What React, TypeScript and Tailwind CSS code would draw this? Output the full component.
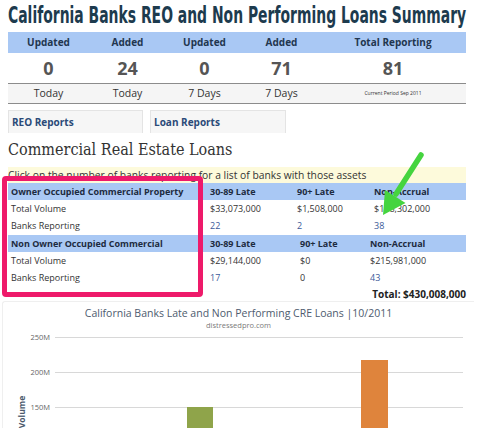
import React from "react";

const blue = "bg-[#a9c8f4]";

function SummaryCell({ children, cls }: { children: React.ReactNode; cls: string }) {
  return <div className={cls}>{children}</div>;
}

export default function App() {
  const heads = ["Updated", "Added", "Updated", "Added", "Total Reporting"];
  const nums = ["0", "24", "0", "71", "81"];
  const bottoms = ["Today", "Today", "7 Days", "7 Days"];
  return (
    <div className="relative w-[480px] h-[428px] overflow-hidden bg-white font-['Open_Sans',sans-serif] text-[#333]">
      <div className="ml-2 w-[458px]">
        <div className="h-[32px] pt-[1px] whitespace-nowrap">
          <h1 className="inline-block origin-left scale-x-[0.673] font-['DejaVu_Sans_Condensed','DejaVu_Sans',sans-serif] font-bold text-[23px] leading-[28px] text-[#1d3b4e]">
            California Banks REO and Non Performing Loans Summary
          </h1>
        </div>

        <div className="grid grid-cols-[81px_77px_77px_77px_1fr] text-center">
          {heads.map((h, i) => (
            <SummaryCell key={"h" + i} cls={`${blue} h-[21px] leading-[21px] text-[10px] font-bold text-[#22364f]`}>
              {h}
            </SummaryCell>
          ))}
          {nums.map((n, i) => (
            <SummaryCell key={"n" + i} cls="h-[31px] leading-[30px] text-[18px] font-bold text-[#555] border-b border-[#8c8c8c]">
              {n}
            </SummaryCell>
          ))}
          {bottoms.map((b, i) => (
            <SummaryCell key={"b" + i} cls="h-[20px] leading-[19px] text-[10.5px] bg-[#f5f5f5] border-b border-[#8c8c8c]">
              {b}
            </SummaryCell>
          ))}
          <SummaryCell cls="h-[20px] leading-[19px] text-[5px] bg-[#f5f5f5] border-b border-[#8c8c8c]">
            Current Period Sep 2011
          </SummaryCell>
        </div>

        <div className="mt-[6px] flex gap-[7px]">
          <div className="w-[135px] h-[23px] bg-[#f6f6f6] border border-b-0 border-[#e4e4e4] pl-[3px] text-[10px] font-bold text-[#2b4a78] leading-[22px]">
            REO Reports
          </div>
          <div className="w-[136px] h-[23px] bg-[#f6f6f6] border border-b-0 border-[#e4e4e4] pl-[3px] text-[10px] font-bold text-[#2b4a78] leading-[22px]">
            Loan Reports
          </div>
        </div>

        <div className="h-[34px] pt-[7px]">
          <h2 className="font-['DejaVu_Serif_Condensed','DejaVu_Serif',serif] text-[16px] leading-[20px] text-[#333]">
            Commercial Real Estate Loans
          </h2>
        </div>

        <div className="h-[16px] leading-[16px] bg-[#fdfadb] text-[10.3px] whitespace-nowrap">
          Click on the number of banks reporting for a list of banks with those assets
        </div>

        <div className="grid grid-cols-[199px_87px_77px_1fr] text-[9px]">
          <div className={`${blue} h-[17px] leading-[17px] pl-[3px] font-bold text-[#1d2b40]`}>Owner Occupied Commercial Property</div>
          <div className={`${blue} h-[17px] leading-[17px] pl-[3px] font-bold text-[#1d2b40]`}>30-89 Late</div>
          <div className={`${blue} h-[17px] leading-[17px] pl-[3px] font-bold text-[#1d2b40]`}>90+ Late</div>
          <div className={`${blue} h-[17px] leading-[17px] pl-[3px] font-bold text-[#1d2b40]`}>Non-Accrual</div>

          <div className="h-[17px] leading-[17px] pl-[3px]">Total Volume</div>
          <div className="h-[17px] leading-[17px] pl-[3px]">$33,073,000</div>
          <div className="h-[17px] leading-[17px] pl-[3px]">$1,508,000</div>
          <div className="h-[17px] leading-[17px] pl-[3px]">$158,302,000</div>

          <div className="h-[18px] leading-[18px] pl-[3px]">Banks Reporting</div>
          <div className="h-[18px] leading-[18px] pl-[3px] text-[#3c5a99]">22</div>
          <div className="h-[18px] leading-[18px] pl-[3px] text-[#3c5a99]">2</div>
          <div className="h-[18px] leading-[18px] pl-[3px] text-[#3c5a99]">38</div>
        </div>

        <div className="grid grid-cols-[199px_90px_70px_1fr] text-[9px]">
          <div className={`${blue} h-[17px] leading-[17px] pl-[3px] font-bold text-[#1d2b40]`}>Non Owner Occupied Commercial</div>
          <div className={`${blue} h-[17px] leading-[17px] pl-[3px] font-bold text-[#1d2b40]`}>30-89 Late</div>
          <div className={`${blue} h-[17px] leading-[17px] pl-[3px] font-bold text-[#1d2b40]`}>90+ Late</div>
          <div className={`${blue} h-[17px] leading-[17px] pl-[3px] font-bold text-[#1d2b40]`}>Non-Accrual</div>

          <div className="h-[17px] leading-[17px] pl-[3px]">Total Volume</div>
          <div className="h-[17px] leading-[17px] pl-[3px]">$29,144,000</div>
          <div className="h-[17px] leading-[17px] pl-[3px]">$0</div>
          <div className="h-[17px] leading-[17px] pl-[3px]">$215,981,000</div>

          <div className="h-[18px] leading-[18px] pl-[3px]">Banks Reporting</div>
          <div className="h-[18px] leading-[18px] pl-[3px] text-[#3c5a99]">17</div>
          <div className="h-[18px] leading-[18px] pl-[3px]">0</div>
          <div className="h-[18px] leading-[18px] pl-[3px] text-[#3c5a99]">43</div>
        </div>

        <div className="h-[14px] leading-[14px] text-right text-[10px] font-bold text-[#222]">Total: $430,008,000</div>
      </div>

      <div className="ml-[2px] w-[472px] border-l border-t border-[#efefef] rounded-tl-[3px]">
        <div className="mt-[4px] h-[14px] leading-[14px] text-center text-[10.5px] text-[#4d5b6e]">
          California Banks Late and Non Performing CRE Loans |10/2011
        </div>
        <div className="h-[10px] leading-[10px] text-center text-[7.5px] text-[#7a7a7a]">distressedpro.com</div>
        <svg width="471" height="98" className="block">
          <g stroke="#d8d8d8" strokeWidth="1">
            <line x1="52" y1="7.5" x2="460" y2="7.5" />
            <line x1="52" y1="42.5" x2="460" y2="42.5" />
            <line x1="52" y1="77.5" x2="460" y2="77.5" />
          </g>
          <g fill="#666" fontSize="7.5" fontFamily="Open Sans, sans-serif" textAnchor="end">
            <text x="47" y="10">250M</text>
            <text x="47" y="45">200M</text>
            <text x="47" y="80">150M</text>
          </g>
          <text
            transform="translate(18,82) rotate(-90)"
            textAnchor="middle"
            dominantBaseline="central"
            fontSize="8.5"
            fontWeight="bold"
            fill="#4d5b6e"
            fontFamily="Open Sans, sans-serif"
          >
            Volume
          </text>
          <rect x="184" y="77" width="26" height="30" fill="#8fa44a" />
          <rect x="358" y="30" width="27" height="80" fill="#df843c" />
        </svg>
      </div>

      <div className="absolute left-[2px] top-[176px] w-[201px] h-[121px] border-[5px] border-[#ee1a6a] rounded-[4px]" />

      <svg className="absolute left-[375px] top-[148px]" width="55" height="75" viewBox="0 0 55 75">
        <line x1="46" y1="7" x2="21" y2="46" stroke="#45d43f" strokeWidth="5.5" strokeLinecap="round" />
        <polygon points="30.5,55 10,42 8,67" fill="#45d43f" />
      </svg>
    </div>
  );
}
